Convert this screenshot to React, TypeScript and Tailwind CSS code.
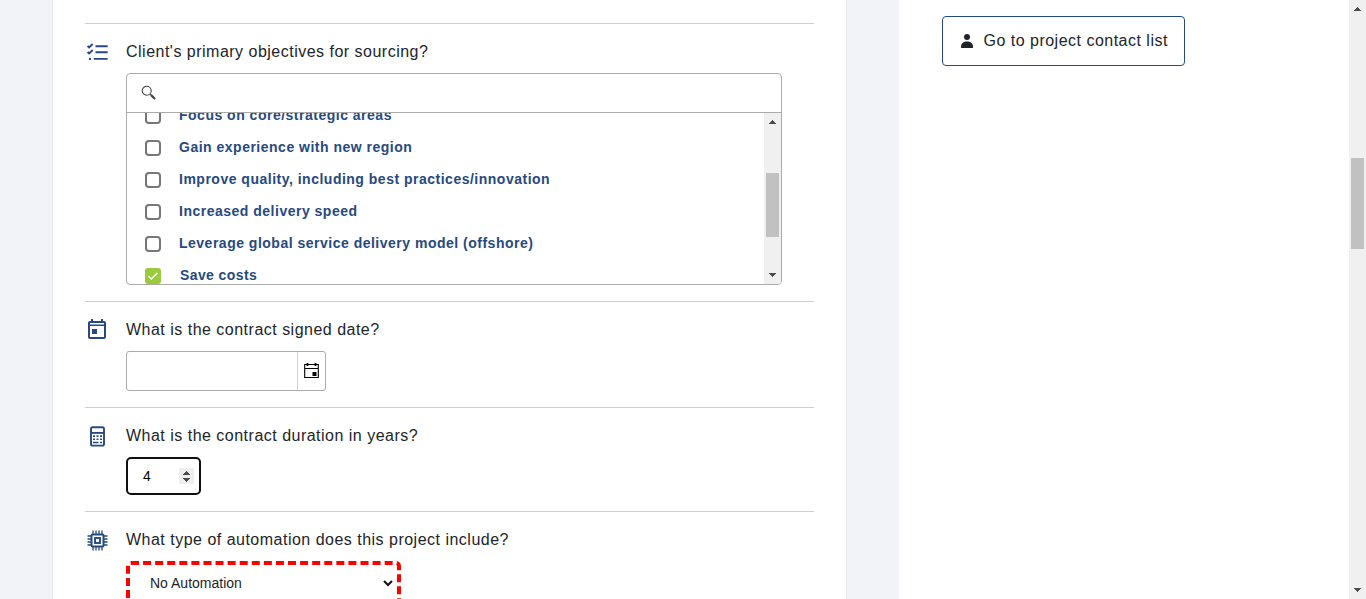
import React from "react";

const objectives = [
  { label: "Focus on core/strategic areas", checked: false },
  { label: "Gain experience with new region", checked: false },
  { label: "Improve quality, including best practices/innovation", checked: false },
  { label: "Increased delivery speed", checked: false },
  { label: "Leverage global service delivery model (offshore)", checked: false },
  { label: "Save costs", checked: true },
];

function ListCheckIcon() {
  return (
    <svg width="24" height="24" viewBox="0 0 24 24" fill="none" stroke="#264a80" strokeWidth="1.900">
      <path d="M10.500 6.300h12.200M10.500 12.300h12.200M8.800 18.900h13.900" strokeLinecap="butt" />
      <path d="M2.600 6l1.500 1.500L7.700 4M2.600 12l1.500 1.500L7.700 10" />
      <circle cx="5" cy="18.900" r="1.200" fill="#264a80" stroke="none" />
    </svg>
  );
}

function TodayIcon() {
  return (
    <svg width="24" height="24" viewBox="0 0 24 24" fill="#264a80">
      <path d="M19 3h-1V1h-2v2H8V1H6v2H5c-1.100 0-2 .9-2 2v14c0 1.100.9 2 2 2h14c1.100 0 2-.9 2-2V5c0-1.100-.9-2-2-2zm0 16H5V8h14v11zM5 6.500V5h14v1.500zM7 11h5v5H7z" fillRule="evenodd" />
    </svg>
  );
}

function CalculatorIcon() {
  return (
    <svg width="24" height="24" viewBox="0 0 24 24" fill="none" stroke="#264a80">
      <rect x="6" y="3.300" width="13" height="18.300" rx="1.600" strokeWidth="1.900" />
      <path d="M6 8.900h13" strokeWidth="1.900" />
      <path d="M8 12.100h2M11.500 12.100h2M15 12.100h2M8 15.200h2M11.500 15.200h2M15 15.200h2M8 18.500h5.500M15 18.500h2" strokeWidth="1.600" />
    </svg>
  );
}

function ChipIcon() {
  return (
    <svg width="24" height="24" viewBox="0 0 24 24" fill="none" stroke="#264a80">
      <rect x="6.500" y="6.500" width="12" height="12" rx="1" strokeWidth="2" />
      <rect x="10" y="10" width="5" height="5" strokeWidth="1.900" />
      <path d="M8 6V2.500M11 6V2.500M14 6V2.500M17 6V2.500M8 19v3.500M11 19v3.500M14 19v3.500M17 19v3.500M6 8H2.500M6 11H2.500M6 14H2.500M6 17H2.500M19 8h3.500M19 11h3.500M19 14h3.500M19 17h3.500" strokeWidth="1.300" />
    </svg>
  );
}

function Arrow({ down = false }: { down?: boolean }) {
  return (
    <svg width="7" height="4" viewBox="0 0 7 4" fill="#4c4c4c" shapeRendering="crispEdges">
      <path d={down ? "M0 0h7v1H6v1H5v1H4v1H3V3H2V2H1V1H0z" : "M3 0h1v1h1v1h1v1h1v1H0V3h1V2h1V1h1z"} />
    </svg>
  );
}

function Question({ icon, title, className, children }: { icon: React.ReactNode; title: string; className: string; children: React.ReactNode }) {
  return (
    <section className={"flex shrink-0 border-t border-[#c9d0d9] pt-4 " + className}>
      <div className="w-[41px] shrink-0">{icon}</div>
      <div className="min-w-0">
        <h2 className="mb-[9px] h-6 whitespace-nowrap text-base leading-6 tracking-[0.49px]">{title}</h2>
        {children}
      </div>
    </section>
  );
}

export default function App() {
  return (
    <div className="flex h-[599px] w-[1366px] overflow-hidden bg-[#f2f3f8] font-['Liberation_Sans',Arial,sans-serif] text-[#212529]">
      <main className="ml-[52px] flex w-[795px] shrink-0 flex-col border-x border-[#e9eaef] bg-white pl-8 pr-8 pt-[23px]">
        <Question icon={<ListCheckIcon />} title="Client's primary objectives for sourcing?" className="h-[278px]">
          <div className="flex h-[212px] w-[656px] flex-col overflow-hidden rounded border border-[#ababab]">
            <div className="flex h-[39px] shrink-0 items-center border-b border-[#ababab] pl-[14px]">
              <svg width="16" height="16" viewBox="0 0 16 16" fill="none" stroke="#444">
                <circle cx="5.700" cy="5.700" r="4.500" strokeWidth="1.100" />
                <path d="M8.900 8.900l1.800 1.800" strokeWidth="1.200" />
                <path d="M10 10l4 4" strokeWidth="2.300" />
              </svg>
            </div>
            <div className="flex min-h-0 flex-1">
              <div className="flex min-w-0 flex-1 flex-col overflow-hidden pl-[18px]">
                <ul className="-mt-[14px]">
                  {objectives.map((o) => (
                    <li key={o.label} className="flex h-8 items-center">
                      {o.checked ? (
                        <span className="mt-px flex size-4 items-center justify-center rounded-[3px] bg-[#9acb3c]">
                          <svg width="12" height="12" viewBox="0 0 12 12" fill="none" stroke="white" strokeWidth="1.500"><path d="M1.500 6.200L4.300 9l6-6" /></svg>
                        </span>
                      ) : (
                        <span className="mt-px size-4 rounded-[4px] border-2 border-[#767676]" />
                      )}
                      <span className={"whitespace-nowrap text-sm font-bold leading-5 text-[#264a80] " + (o.checked ? "ml-[19px] tracking-[0.4px]" : "ml-[18px] tracking-[0.5px]")}>{o.label}</span>
                    </li>
                  ))}
                </ul>
              </div>
              <div className="flex w-[17px] flex-col items-center bg-[#f0f0f0] pb-[7px] pt-[7px]">
                <Arrow />
                <div className="mt-[49px] h-16 w-[13px] bg-[#c1c1c1]" />
                <div className="flex-1" />
                <Arrow down />
              </div>
            </div>
          </div>
        </Question>

        <Question icon={<TodayIcon />} title="What is the contract signed date?" className="h-[106px]">
          <div className="flex h-10 w-[200px] rounded-[3px] border border-[#ababab]">
            <div className="w-[171px] border-r border-[#d0d0d0]" />
            <div className="flex flex-1 items-center justify-center pb-0.5">
              <svg width="15" height="16" viewBox="0 0 15 16" fill="none" stroke="#000">
                <path d="M.7 2.500h13.600v13H.7zM.7 6.500h13.600" strokeWidth="1.100" />
                <path d="M3.500 1v3M11.500 1v3" strokeWidth="1.800" />
                <path d="M8.500 10h4v4h-4z" fill="#000" stroke="none" />
              </svg>
            </div>
          </div>
        </Question>

        <Question icon={<CalculatorIcon />} title="What is the contract duration in years?" className="h-[104px]">
          <div className="flex h-[38px] w-[75px] items-center rounded-[5px] border-2 border-[#101010] pl-[15px] text-sm text-black">
            <span className="w-9">4</span>
            <div className="flex h-4 w-[15px] flex-col items-center justify-center gap-[3px] bg-[#efefef]">
              <Arrow />
              <Arrow down />
            </div>
          </div>
        </Question>

        <Question icon={<ChipIcon />} title="What type of automation does this project include?" className="h-[110px]">
          <div className="flex h-[44px] w-[275px] items-center justify-between rounded-[5px] border-4 border-dashed border-[#ff0000] pl-5 pr-1 text-sm">
            <span>No Automation</span>
            <svg width="10" height="7" viewBox="0 0 10 7" fill="none" stroke="#111" strokeWidth="2"><path d="M1 1l4 4 4-4" /></svg>
          </div>
        </Question>
      </main>

      <aside className="ml-[52px] flex-1 bg-white pl-[43px] pt-4">
        <button className="flex h-[50px] w-[243px] items-center rounded border border-[#264a80] pl-[18px] text-base">
          <svg width="12" height="14" viewBox="0 0 12 14" fill="#212529">
            <circle cx="6" cy="3.100" r="3" />
            <path d="M0 14v-1.500c0-3 2.500-5 6-5s6 2 6 5V14z" />
          </svg>
          <span className="ml-[10.500px] whitespace-nowrap tracking-[0.49px]">Go to project contact list</span>
        </button>
      </aside>

      <div className="flex w-[17px] shrink-0 flex-col items-center bg-[#f0f0f0] py-[7px]">
        <Arrow />
        <div className="mt-[147px] h-[91px] w-[13px] bg-[#c1c1c1]" />
        <div className="flex-1" />
        <Arrow down />
      </div>
    </div>
  );
}
